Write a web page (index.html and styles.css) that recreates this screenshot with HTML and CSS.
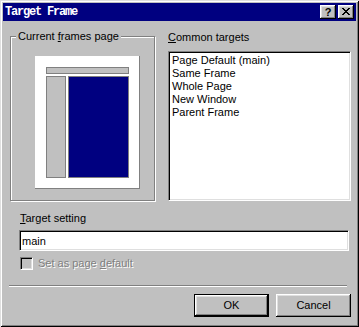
FILE: index.html
```html
<!DOCTYPE html>
<html lang="en">
<head>
  <meta charset="UTF-8">
  <meta name="viewport" content="width=device-width, initial-scale=1.0">
  <title>Target Frame</title>
  <link rel="stylesheet" href="styles.css">
</head>
<body>
  <div class="window">
    <div class="titlebar">
      <span class="title">Target Frame</span>
      <div class="caption-buttons">
        <button class="caption-btn help">?</button>
        <button class="caption-btn close">
          <svg width="8" height="7" viewBox="0 0 8 7">
            <path d="M0 0h2v1h1v1h2v-1h1v-1h2v1h-1v1h-1v1h-1v1h1v1h1v1h1v1h-2v-1h-1v-1h-2v1h-1v1h-2v-1h1v-1h1v-1h1v-1h-1v-1h-1v-1h-1z" fill="#000"/>
          </svg>
        </button>
      </div>
    </div>

    <div class="content">
      <div class="top-row">
        <div class="group">
          <span class="group-label">Current <u>f</u>rames page</span>
          <div class="preview">
            <div class="frame frame-top"></div>
            <div class="frame-row">
              <div class="frame frame-left"></div>
              <div class="frame frame-main"></div>
            </div>
          </div>
        </div>

        <div class="targets">
          <div class="label"><u>C</u>ommon targets</div>
          <ul class="listbox">
            <li>Page Default (main)</li>
            <li>Same Frame</li>
            <li>Whole Page</li>
            <li>New Window</li>
            <li>Parent Frame</li>
          </ul>
        </div>
      </div>

      <div class="setting">
        <div class="label"><u>T</u>arget setting</div>
        <input type="text" class="textbox" value="main">
        <label class="check disabled">
          <span class="checkbox"></span>
          <span>Set as page <u>d</u>efault</span>
        </label>
      </div>

      <div class="separator"></div>

      <div class="actions">
        <button class="btn default">OK</button>
        <button class="btn">Cancel</button>
      </div>
    </div>
  </div>
</body>
</html>
```

FILE: styles.css
```css
/* Dialog window */
body {
  margin: 0;
  background: #c0c0c0;
  font-family: "Liberation Sans", Arial, sans-serif;
  font-size: 11px;
  line-height: 13px;
  color: #000;
}
.window {
  width: 359px;
  height: 327px;
  box-sizing: border-box;
  padding: 3px;
  background: #c0c0c0;
  box-shadow: inset 1px 1px #dfdfdf, inset -1px -1px #000,
              inset 2px 2px #fff, inset -2px -2px #808080;
}
.titlebar {
  height: 18px;
  background: #000080;
  display: flex;
  align-items: center;
  justify-content: space-between;
  padding: 0 2px 0 2px;
}
.title {
  color: #fff;
  font-family: "Liberation Mono", "Courier New", monospace;
  font-size: 12px;
  font-weight: bold;
  letter-spacing: -1.2px;
  line-height: 14px;
}
.caption-buttons {
  display: flex;
  gap: 2px;
}
.caption-btn {
  width: 16px;
  height: 14px;
  padding: 0;
  border: none;
  background: #c0c0c0;
  box-shadow: inset -1px -1px #000, inset 1px 1px #fff,
              inset -2px -2px #808080, inset 2px 2px #dfdfdf;
  display: flex;
  align-items: center;
  justify-content: center;
  font-family: "Liberation Sans", Arial, sans-serif;
  font-size: 11px;
  font-weight: bold;
  line-height: 11px;
}
.close svg {
  display: block;
  margin-top: -1px;
}

/* Content */
.content {
  padding: 9px 0 0 7px;
}
.top-row {
  display: flex;
  gap: 13px;
}
.group {
  position: relative;
  width: 145px;
  height: 165px;
  box-sizing: border-box;
  margin-top: 6px;
  border: 1px solid #808080;
  box-shadow: inset 1px 1px #fff, 1px 1px #fff;
}
.group-label {
  position: absolute;
  top: -7px;
  left: 5px;
  padding: 0 2px;
  background: #c0c0c0;
}
.preview {
  width: 105px;
  height: 133px;
  box-sizing: border-box;
  margin: 19px 0 0 24px;
  padding: 11px 10px 10px 11px;
  background: #fff;
  border-right: 1px solid #808080;
  border-bottom: 1px solid #808080;
}
.frame {
  box-sizing: border-box;
  border: 1px solid #808080;
  background: #c0c0c0;
}
.frame-top {
  height: 7px;
}
.frame-row {
  display: flex;
  gap: 2px;
  margin-top: 2px;
  height: 102px;
}
.frame-left {
  width: 20px;
}
.frame-main {
  flex: 1;
  background: #000080;
}

.targets {
  width: 183px;
}
.label {
  height: 13px;
  margin-top: 1px;
}
.listbox {
  list-style: none;
  margin: 7px 0 0;
  padding: 2px 2px 1px;
  height: 150px;
  box-sizing: border-box;
  background: #fff;
  border: 1px solid;
  border-color: #808080 #fff #fff #808080;
  box-shadow: inset 1px 1px #000, inset -1px -1px #dfdfdf;
}
.listbox li {
  padding-left: 1px;
  white-space: nowrap;
}

/* Target setting */
.setting {
  margin-left: 10px;
  padding-top: 10px;
}
.textbox {
  display: block;
  width: 330px;
  height: 21px;
  box-sizing: border-box;
  margin: 5px 0 0 -1px;
  padding: 0 2px;
  font: inherit;
  background: #fff;
  border: 1px solid;
  border-color: #808080 #fff #fff #808080;
  box-shadow: inset 1px 1px #000, inset -1px -1px #dfdfdf;
  outline: none;
}
.check {
  display: flex;
  align-items: center;
  gap: 5px;
  margin-top: 6px;
  height: 13px;
}
.checkbox {
  width: 13px;
  height: 13px;
  box-sizing: border-box;
  background: #c0c0c0;
  border: 1px solid;
  border-color: #808080 #fff #fff #808080;
  box-shadow: inset 1px 1px #000, inset -1px -1px #dfdfdf;
}
.disabled {
  color: #808080;
  text-shadow: 1px 1px #fff;
}

.separator {
  width: 338px;
  height: 1px;
  margin: 15px 0 0 -1px;
  background: #808080;
  box-shadow: 0 1px #fff;
}

.actions {
  display: flex;
  justify-content: flex-end;
  gap: 7px;
  width: 341px;
  margin-top: 8px;
}
.btn {
  width: 75px;
  height: 23px;
  padding: 0;
  font: inherit;
  color: #000;
  background: #c0c0c0;
  border: none;
  box-shadow: inset -1px -1px #000, inset 1px 1px #fff,
              inset -2px -2px #808080, inset 2px 2px #dfdfdf;
}
.btn.default {
  box-shadow: inset 0 0 0 1px #000, inset -2px -2px #000, inset 2px 2px #fff,
              inset -3px -3px #808080, inset 3px 3px #dfdfdf;
}
```
